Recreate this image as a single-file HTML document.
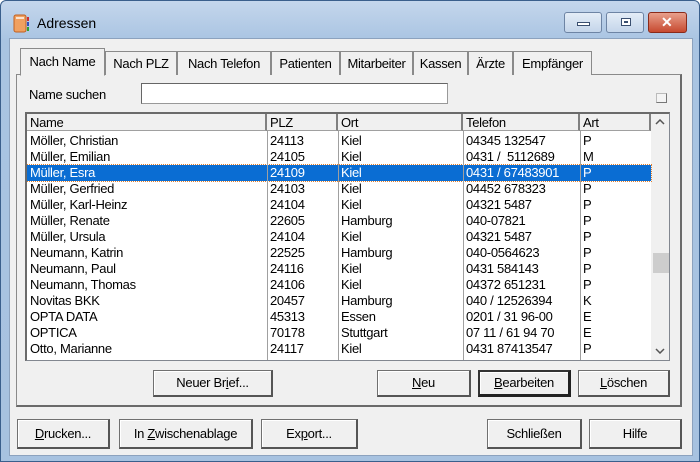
<!DOCTYPE html>
<html><head><meta charset="utf-8"><style>
*{box-sizing:border-box;margin:0;padding:0}
body{width:700px;height:462px;overflow:hidden;font-family:"Liberation Sans",sans-serif;font-size:12px;color:#000;background:#fff;letter-spacing:-0.3px}
.win{position:absolute;left:0;top:0;width:700px;height:462px;background:linear-gradient(#c4d6ec,#a9c4e2 40px,#a7c2e0);border:1px solid #3a5f8c;border-radius:6px 6px 0 0}
.client{position:absolute;left:8px;top:37px;width:684px;height:418px;background:#f0f0f0;border:1px solid #8ca2be}
.abs{position:absolute}
.title{left:36px;top:14px;font-size:14px;color:#000;letter-spacing:0}
.tb{position:absolute;top:11px;height:21px;border:1px solid #6d84a4;border-radius:3px;background:linear-gradient(#e4edf7,#c4d5ea)}
.tab{position:absolute;top:50px;height:24px;border:1px solid #8a8a8a;border-bottom:none;background:#f0f0f0;padding:4px 0;white-space:nowrap;font-size:13px;text-align:center}
.panel{position:absolute;left:15px;top:73px;width:666px;height:333px;border:1px solid #8a8a8a;border-right:2px solid #6a6a6a;border-bottom:2px solid #6a6a6a;background:#f0f0f0}
.list{position:absolute;left:24px;top:111px;width:645px;height:249px;border:1px solid #828790;border-top:2px solid #6a6a6a;border-left:2px solid #6a6a6a;background:#fff;overflow:hidden}
.hdr{position:absolute;top:0;height:17px;background:#f0f0f0;border-right:2px solid #808080;border-bottom:1px solid #a0a0a0;padding:1px 3px;font-size:13px}
.row{position:absolute;left:0;width:624px;height:16px;font-size:13px}
.row span{position:absolute;top:0;padding-left:3px;line-height:16px}
.sel{background:#0a6dd3;color:#fff;outline:1px dotted #e08030}
.btn{position:absolute;border:1px solid #707070;border-right:2px solid #555;border-bottom:2px solid #555;background:#f0f0f0;text-align:center;font-size:13px;box-shadow:inset 1px 1px #fff}
.sb{position:absolute;left:624px;top:0;width:18px;height:247px;background:#f0f0f0}
</style></head><body>
<div class="win">
<svg class="abs" style="left:12px;top:13px" width="18" height="20"><rect x="1" y="1" width="12" height="17" rx="2" fill="#f0a060" stroke="#c06020"/><rect x="3" y="3" width="8" height="2" fill="#fff" opacity=".7"/><rect x="14" y="3" width="2" height="4" fill="#d03030"/><rect x="14" y="8" width="2" height="4" fill="#3050c0"/><rect x="14" y="13" width="2" height="4" fill="#30a030"/></svg>
<div class="abs title">Adressen</div>
<div class="tb" style="left:563px;width:38px"><div class="abs" style="left:12px;top:9px;width:13px;height:4px;background:#fff;border:1px solid #3a4f70"></div></div>
<div class="tb" style="left:605px;width:38px"><div class="abs" style="left:14px;top:5px;width:10px;height:8px;border:1px solid #3a4f70;background:#fff"><div class="abs" style="left:2px;top:2px;width:4px;height:2px;background:#3a4f70"></div></div></div>
<div class="tb" style="left:647px;width:39px;background:linear-gradient(#e8a08c,#c74a30);border-color:#8a2a1a"><div class="abs" style="left:12px;top:1px;color:#fff;font-weight:bold;font-size:14px">✕</div></div>
<div class="client"></div>
<div class="panel"></div>
<div class="tab" style="left:19px;top:47px;width:85px;height:28px;border-bottom:1px solid #f0f0f0;z-index:2;padding-top:5px">Nach Name</div>
<div class="tab" style="left:104px;width:72px">Nach PLZ</div>
<div class="tab" style="left:176px;width:94px">Nach Telefon</div>
<div class="tab" style="left:270px;width:69px">Patienten</div>
<div class="tab" style="left:339px;width:73px">Mitarbeiter</div>
<div class="tab" style="left:412px;width:55px">Kassen</div>
<div class="tab" style="left:467px;width:45px">Ärzte</div>
<div class="tab" style="left:512px;width:79px">Empfänger</div>
<div class="abs" style="left:28px;top:86px;font-size:13px">Name suchen</div>
<div class="abs" style="left:140px;top:82px;width:307px;height:21px;background:#fff;border:1px solid #999;border-top-color:#666;border-left-color:#666"></div>
<div class="abs" style="left:655px;top:92px;width:11px;height:10px;border:1px solid #bbb;border-right-color:#777;border-bottom-color:#777;background:#f4f4f4"></div>
<div class="list">
<div class="hdr" style="left:0;width:240px">Name</div>
<div class="hdr" style="left:240px;width:71px">PLZ</div>
<div class="hdr" style="left:311px;width:125px">Ort</div>
<div class="hdr" style="left:436px;width:117px">Telefon</div>
<div class="hdr" style="left:553px;width:71px">Art</div>
<div class="sb"><svg class="abs" style="left:4px;top:5px" width="10" height="6"><path d="M1 5L5 1L9 5" fill="none" stroke="#555" stroke-width="1.5"/></svg><div class="abs" style="left:2px;top:139px;width:16px;height:20px;background:#cdcdcd"></div><svg class="abs" style="left:4px;top:234px" width="10" height="6"><path d="M1 1L5 5L9 1" fill="none" stroke="#555" stroke-width="1.5"/></svg></div>
<div class="row" style="top:19px"><span style="left:0">Möller, Christian</span><span style="left:240px">24113</span><span style="left:311px">Kiel</span><span style="left:436px">04345 132547</span><span style="left:553px">P</span></div>
<div class="row" style="top:35px"><span style="left:0">Müller, Emilian</span><span style="left:240px">24105</span><span style="left:311px">Kiel</span><span style="left:436px">0431 /&nbsp; 5112689</span><span style="left:553px">M</span></div>
<div class="row sel" style="top:51px"><span style="left:0">Müller, Esra</span><span style="left:240px">24109</span><span style="left:311px">Kiel</span><span style="left:436px">0431 / 67483901</span><span style="left:553px">P</span></div>
<div class="row" style="top:67px"><span style="left:0">Müller, Gerfried</span><span style="left:240px">24103</span><span style="left:311px">Kiel</span><span style="left:436px">04452 678323</span><span style="left:553px">P</span></div>
<div class="row" style="top:83px"><span style="left:0">Müller, Karl-Heinz</span><span style="left:240px">24104</span><span style="left:311px">Kiel</span><span style="left:436px">04321 5487</span><span style="left:553px">P</span></div>
<div class="row" style="top:99px"><span style="left:0">Müller, Renate</span><span style="left:240px">22605</span><span style="left:311px">Hamburg</span><span style="left:436px">040-07821</span><span style="left:553px">P</span></div>
<div class="row" style="top:115px"><span style="left:0">Müller, Ursula</span><span style="left:240px">24104</span><span style="left:311px">Kiel</span><span style="left:436px">04321 5487</span><span style="left:553px">P</span></div>
<div class="row" style="top:131px"><span style="left:0">Neumann, Katrin</span><span style="left:240px">22525</span><span style="left:311px">Hamburg</span><span style="left:436px">040-0564623</span><span style="left:553px">P</span></div>
<div class="row" style="top:147px"><span style="left:0">Neumann, Paul</span><span style="left:240px">24116</span><span style="left:311px">Kiel</span><span style="left:436px">0431 584143</span><span style="left:553px">P</span></div>
<div class="row" style="top:163px"><span style="left:0">Neumann, Thomas</span><span style="left:240px">24106</span><span style="left:311px">Kiel</span><span style="left:436px">04372 651231</span><span style="left:553px">P</span></div>
<div class="row" style="top:179px"><span style="left:0">Novitas BKK</span><span style="left:240px">20457</span><span style="left:311px">Hamburg</span><span style="left:436px">040 / 12526394</span><span style="left:553px">K</span></div>
<div class="row" style="top:195px"><span style="left:0">OPTA DATA</span><span style="left:240px">45313</span><span style="left:311px">Essen</span><span style="left:436px">0201 / 31 96-00</span><span style="left:553px">E</span></div>
<div class="row" style="top:211px"><span style="left:0">OPTICA</span><span style="left:240px">70178</span><span style="left:311px">Stuttgart</span><span style="left:436px">07 11 / 61 94 70</span><span style="left:553px">E</span></div>
<div class="row" style="top:227px"><span style="left:0">Otto, Marianne</span><span style="left:240px">24117</span><span style="left:311px">Kiel</span><span style="left:436px">0431 87413547</span><span style="left:553px">P</span></div>
<div class="abs" style="left:240px;top:17px;width:1px;height:230px;background:#a0a0a0"></div>
<div class="abs" style="left:311px;top:17px;width:1px;height:230px;background:#a0a0a0"></div>
<div class="abs" style="left:436px;top:17px;width:1px;height:230px;background:#a0a0a0"></div>
<div class="abs" style="left:553px;top:17px;width:1px;height:230px;background:#a0a0a0"></div>
</div>
<div class="btn" style="left:152px;top:369px;width:120px;height:27px;line-height:24px">Neuer Br<u>i</u>ef...</div>
<div class="btn" style="left:376px;top:369px;width:94px;height:27px;line-height:24px"><u>N</u>eu</div>
<div class="btn" style="left:477px;top:369px;width:93px;height:27px;line-height:22px;border:2px solid #333;border-right:3px solid #222;border-bottom:3px solid #222"><u>B</u>earbeiten</div>
<div class="btn" style="left:577px;top:369px;width:92px;height:27px;line-height:24px"><u>L</u>öschen</div>
<div class="btn" style="left:16px;top:418px;width:93px;height:30px;line-height:27px"><u>D</u>rucken...</div>
<div class="btn" style="left:118px;top:418px;width:134px;height:30px;line-height:27px">In <u>Z</u>wischenablage</div>
<div class="btn" style="left:260px;top:418px;width:97px;height:30px;line-height:27px">Ex<u>p</u>ort...</div>
<div class="btn" style="left:486px;top:418px;width:95px;height:30px;line-height:27px">Schließen</div>
<div class="btn" style="left:588px;top:418px;width:93px;height:30px;line-height:27px">Hilfe</div>
</div>
</body></html>
